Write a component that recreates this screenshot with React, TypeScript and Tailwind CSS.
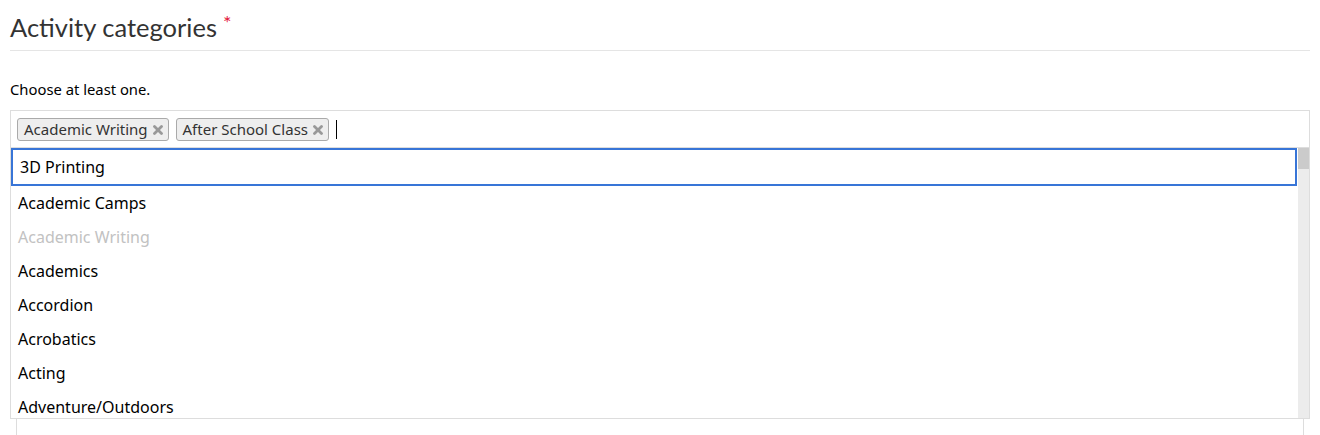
const options = [
  "Academic Camps",
  "Academic Writing",
  "Academics",
  "Accordion",
  "Acrobatics",
  "Acting",
  "Adventure/Outdoors",
]

const selected = ["Academic Writing", "After School Class"]

function RemoveIcon() {
  return (
    <svg viewBox="0 0 10 10" className="h-[10px] w-[10px]" stroke="#999" strokeWidth={2.8} strokeLinecap="round">
      <line x1="1.5" y1="1.5" x2="8.5" y2="8.5" />
      <line x1="8.5" y1="1.5" x2="1.5" y2="8.5" />
    </svg>
  )
}

export default function App() {
  return (
    <div className="h-[435px] overflow-hidden bg-white px-[10px] font-['Noto_Sans',sans-serif] text-black">
      {/* Heading */}
      <h2 className="border-b border-[#e5e5e5] pt-[12px] pb-[7px] font-['Lato',sans-serif] text-[25.5px] font-normal leading-[31px] text-[#333]">
        Activity categories
        <span className="ml-[6px] align-top text-[20px] leading-none text-[#e3173e]">*</span>
      </h2>

      <p className="mt-[28px] text-[14.8px] leading-[20px]">Choose at least one.</p>

      {/* Multi select */}
      <div className="relative z-10 mt-[11px]">
        <div className="flex h-[37px] items-start gap-[7px] border border-b-0 border-[#ddd] px-[6px] pt-[7px]">
          {selected.map((s) => (
            <span
              key={s}
              className="flex h-[23px] items-center gap-[5px] rounded-[3px] border border-[#aaa] bg-[#eee] pl-[6px] pr-[5px] text-[15px] leading-none text-[#333]"
            >
              {s}
              <RemoveIcon />
            </span>
          ))}
          <span className="mt-[2px] h-[19px] w-px bg-black" />
        </div>

        {/* Dropdown */}
        <div className="absolute left-0 right-0 top-[37px] flex h-[272px] border border-[#ddd] bg-white">
          <ul className="flex-1 overflow-hidden text-[16px]">
            <li className="flex h-[38px] items-center border-2 border-[#3875d7] px-[7px]">3D Printing</li>
            {options.map((o) => (
              <li
                key={o}
                className={`flex h-[34px] items-center px-[7px] ${o === "Academic Writing" ? "text-[#c2c2c2]" : ""}`}
              >
                {o}
              </li>
            ))}
          </ul>
          <div className="ml-[1px] w-[11px] bg-[#ececec]">
            <div className="h-[21px] bg-[#cbcbcb]" />
          </div>
        </div>
      </div>

      {/* Field underneath the open menu */}
      <div className="mx-[6px] mt-[40px] h-[248px] border-x border-t border-[#ddd]" />
    </div>
  )
}
